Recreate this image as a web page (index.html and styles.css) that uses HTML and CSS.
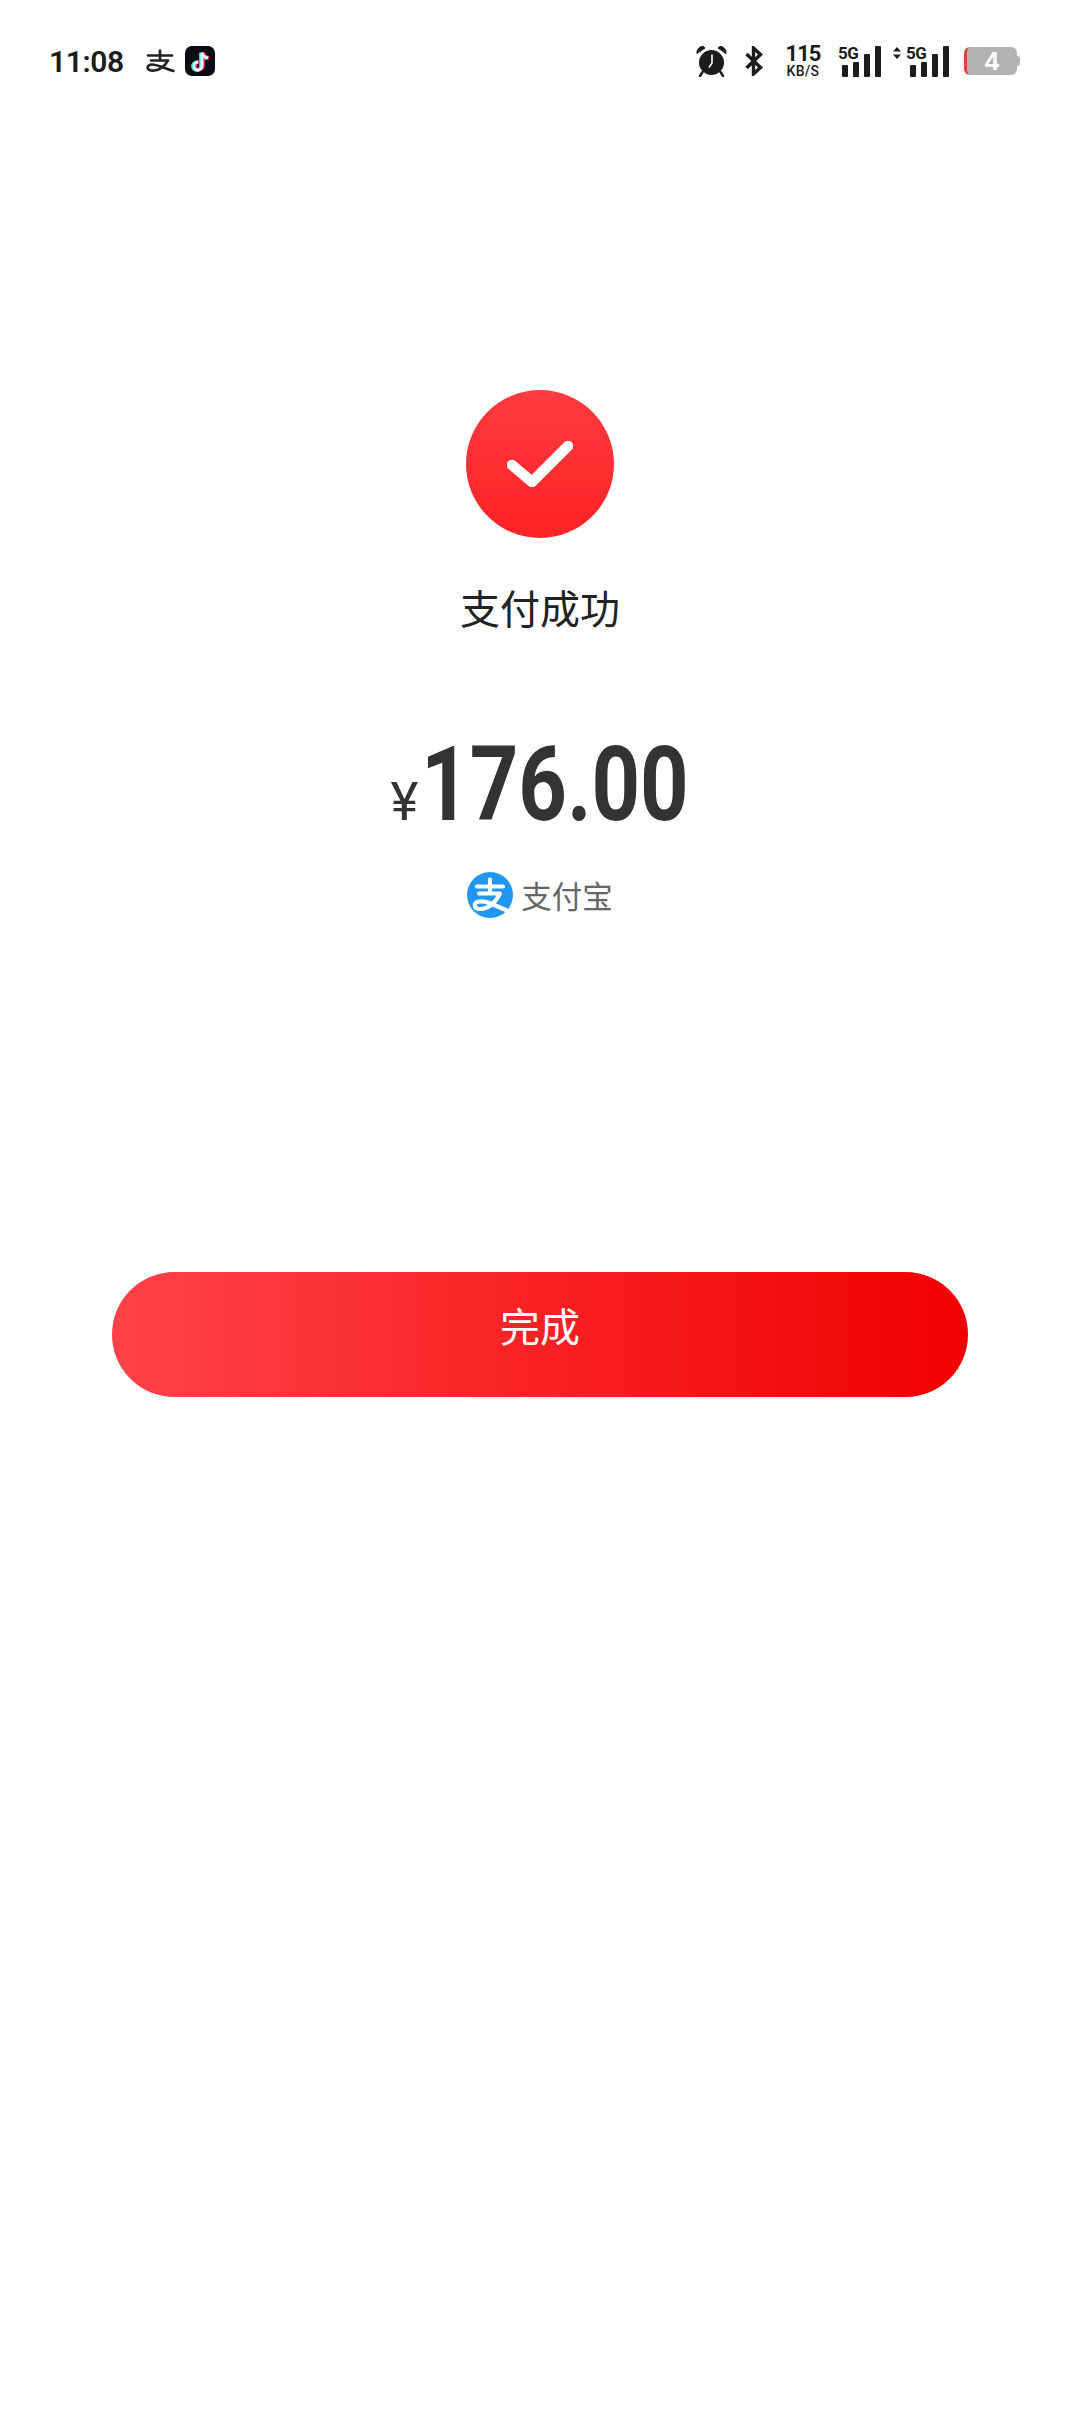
FILE: index.html
```html
<!DOCTYPE html>
<html lang="zh-CN">
<head>
    <meta charset="UTF-8">
    <title>支付成功</title>
    <link rel="stylesheet" href="styles.css">
</head>
<body>
    <div class="status-bar">
        <div class="status-left">
            <span class="clock">11:08</span>
            <svg class="ic-zhi" viewBox="0 0 30 24" fill="none" stroke="#222" stroke-width="2.6" stroke-linecap="round" stroke-linejoin="round">
                <path d="M3 6.5H27M15 1.5V11M6 11.500H23C19 18 13 22.500 6 21.500C1 20.500 2 15.500 7 15.500C13 15.500 21 20 28.500 22"/>
            </svg>
            <svg class="ic-tiktok" viewBox="0 0 30 30">
                <rect width="30" height="30" rx="7" fill="#0b0b16"/>
                <path d="M17 6V19.5A4 4 0 1 1 13 15.5M17 6C17.500 9 19.500 11 23 11.500" fill="none" stroke="#25f4ee" stroke-width="3.400" transform="translate(-1.200 .8)"/>
                <path d="M17 6V19.500A4 4 0 1 1 13 15.500M17 6C17.500 9 19.500 11 23 11.500" fill="none" stroke="#fe2c55" stroke-width="3.400" transform="translate(1.200 .2)"/>
                <path d="M17 6V19.500A4 4 0 1 1 13 15.500M17 6C17.500 9 19.500 11 23 11.500" fill="none" stroke="#fff" stroke-width="2.800" transform="translate(0 .5)"/>
            </svg>
        </div>
        <div class="status-right">
            <svg class="ic-alarm" viewBox="0 0 32 32">
                <circle cx="16.500" cy="17.500" r="12.500" fill="#1c1c1c"/>
                <path d="M2 8.500C1.500 4.500 4.500 1 8.500 1.500L10 3ZM31 8.500C31.500 4.500 28.500 1 24.500 1.500L23 3Z" fill="#1c1c1c" stroke="#1c1c1c" stroke-linejoin="round"/>
                <path d="M7.500 27L5 31M25.500 27L28 31" stroke="#1c1c1c" stroke-width="2.400" stroke-linecap="round"/>
                <path d="M17 9.500V18L14 22.500" fill="none" stroke="#fff" stroke-width="1.600"/>
            </svg>
            <svg class="ic-bt" viewBox="0 0 18 30" fill="none" stroke="#1c1c1c" stroke-width="3.400">
                <path d="M1.500 8L15.500 21.500L8.500 28V2L15.500 8.500L1.500 22"/>
            </svg>
            <div class="speed">
                <span class="speed-num">115</span>
                <span class="speed-unit">KB/S</span>
            </div>
            <div class="signal">
                <span class="net">5G</span>
                <div class="bars">
                    <i class="b1"></i><i class="b2"></i><i class="b3"></i><i class="b4"></i>
                </div>
            </div>
            <div class="signal signal-data">
                <svg class="ic-updown" viewBox="0 0 8 12"><path d="M4 0L8 4.500H0ZM4 12L0 7.500H8Z" fill="#1c1c1c"/></svg>
                <span class="net">5G</span>
                <div class="bars">
                    <i class="b1"></i><i class="b2"></i><i class="b3"></i><i class="b4"></i>
                </div>
            </div>
            <div class="battery">
                <div class="battery-body"><span>4</span></div>
                <div class="battery-cap"></div>
            </div>
        </div>
    </div>

    <div class="content">
        <div class="check-circle">
            <svg viewBox="0 0 66 46" fill="none" stroke="#fff" stroke-width="10.500" stroke-linecap="round" stroke-linejoin="round">
                <path d="M5 24L25 41L61 5"/>
            </svg>
        </div>
        <div class="result-title">支付成功</div>
        <div class="amount">
            <span class="currency">¥</span><span class="value">176.00</span>
        </div>
        <div class="pay-method">
            <svg class="ic-alipay" viewBox="0 0 46 46">
                <circle cx="23" cy="23" r="23" fill="#2196f3"/>
                <path d="M10 14.500H36M23 7.500V21M12 21.500H33C28 31 21 37 13 37C6.500 37 6 30.500 12 29.500C20 28 28 34 39 38" fill="none" stroke="#fff" stroke-width="4.200" stroke-linecap="round" stroke-linejoin="round"/>
            </svg>
            <span>支付宝</span>
        </div>
        <button class="done-btn">完成</button>
    </div>
</body>
</html>
```

FILE: styles.css
```css
* {
    margin: 0;
    padding: 0;
    box-sizing: border-box;
}

body {
    width: 1080px;
    height: 2412px;
    background-color: #ffffff;
    font-family: "Noto Sans CJK SC", Roboto, sans-serif;
    color: #1c1c1c;
    overflow: hidden;
}

.status-bar {
    height: 124px;
    padding: 45px 60px 0 49px;
    display: flex;
    justify-content: space-between;
    align-items: flex-start;
}

.status-left {
    display: flex;
    align-items: center;
    height: 32px;
}

.clock {
    font-family: Roboto, sans-serif;
    font-weight: 600;
    font-size: 30px;
    letter-spacing: -0.4px;
    color: #1c1c1c;
    width: 96px;
}

.ic-zhi {
    width: 30px;
    height: 24px;
    margin-right: 10px;
}

.ic-tiktok {
    width: 30px;
    height: 30px;
}

.status-right {
    display: flex;
    align-items: center;
    height: 32px;
}

.ic-alarm {
    width: 32px;
    height: 32px;
    margin-right: 18px;
}

.ic-bt {
    width: 18px;
    height: 30px;
    margin-right: 22px;
}

.speed {
    width: 36px;
    display: flex;
    flex-direction: column;
    align-items: center;
    font-family: Roboto, sans-serif;
    font-weight: 700;
    line-height: 1;
    margin-right: 17px;
}

.speed-num {
    font-size: 22px;
    line-height: 18px;
    letter-spacing: -1px;
}

.speed-unit {
    font-size: 14px;
    line-height: 12px;
    margin-top: 2px;
    font-weight: 500;
    letter-spacing: 0.3px;
}

.signal {
    position: relative;
    width: 43px;
    height: 32px;
    display: flex;
    justify-content: flex-end;
    align-items: flex-end;
    margin-right: 12px;
}

.signal-data {
    width: 56px;
    margin-right: 15px;
}

.net {
    position: absolute;
    left: 0;
    top: 1px;
    font-family: Roboto, sans-serif;
    font-weight: 700;
    font-size: 17px;
    line-height: 14px;
    letter-spacing: -0.5px;
}

.signal-data .net {
    left: 13px;
}

.ic-updown {
    position: absolute;
    left: 0;
    top: 2px;
    width: 8px;
    height: 12px;
}

.bars {
    display: flex;
    align-items: flex-end;
    gap: 4.5px;
}

.bars i {
    display: block;
    width: 6.5px;
    background-color: #1c1c1c;
    border-radius: 1px;
}

.bars .b1 { height: 12px; }
.bars .b2 { height: 15px; }
.bars .b3 { height: 23px; }
.bars .b4 { height: 31px; }

.battery {
    display: flex;
    align-items: center;
}

.battery-body {
    width: 53px;
    height: 28px;
    background-color: #b2b2b2;
    border-left: 3px solid #d8433f;
    border-radius: 6px;
    display: flex;
    align-items: center;
    justify-content: center;
    color: #ffffff;
    font-family: "Liberation Sans", sans-serif;
    font-weight: 700;
    font-size: 26px;
}

.battery-cap {
    width: 3px;
    height: 10px;
    background-color: #b2b2b2;
    border-radius: 0 3px 3px 0;
}

.content {
    display: flex;
    flex-direction: column;
    align-items: center;
}

.check-circle {
    width: 148px;
    height: 148px;
    margin-top: 266px;
    border-radius: 50%;
    background: linear-gradient(180deg, #ff3c3f 0%, #ff2226 100%);
    display: flex;
    align-items: center;
    justify-content: center;
}

.check-circle svg {
    width: 66px;
    height: 46px;
}

.result-title {
    margin-top: 41px;
    font-size: 40px;
    line-height: 56px;
    color: #222222;
}

.amount {
    margin-top: 98px;
    display: flex;
    align-items: baseline;
    color: #333333;
    line-height: 1;
}

.currency {
    font-family: Roboto, sans-serif;
    font-size: 53px;
    margin-right: 3px;
}

/* no DIN-style face here: squeeze Roboto to the same digit width */
.value {
    display: inline-block;
    width: 268px;
    font-family: Roboto, sans-serif;
    font-weight: 700;
    font-size: 104px;
    white-space: nowrap;
    transform: scaleX(0.815);
    transform-origin: left;
}

.pay-method {
    margin-top: 35px;
    display: flex;
    align-items: center;
    gap: 8px;
    font-size: 30.5px;
    color: #666666;
}

.ic-alipay {
    width: 46px;
    height: 46px;
}

.done-btn {
    margin-top: 354px;
    width: 856px;
    height: 125px;
    padding-bottom: 20px;
    border: none;
    border-radius: 63px;
    background: linear-gradient(90deg, #ff4348 0%, #f10000 100%);
    color: #ffffff;
    font-family: inherit;
    font-size: 40px;
}
```
